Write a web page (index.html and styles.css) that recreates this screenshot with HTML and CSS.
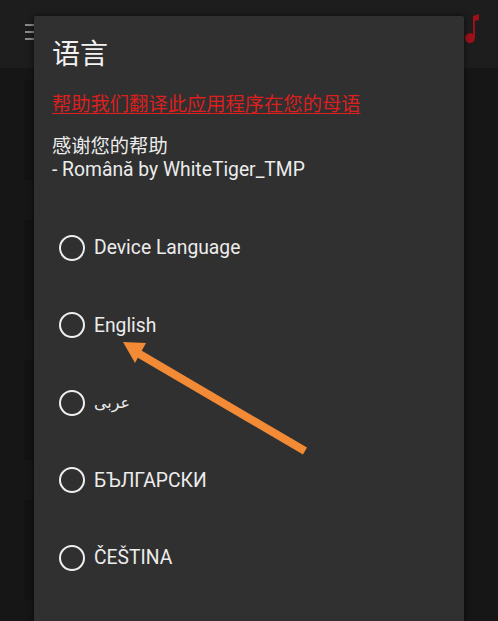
FILE: index.html
```html
<!DOCTYPE html>
<html>
<head>
<meta charset="utf-8">
<link rel="stylesheet" href="styles.css">
</head>
<body>
<div class="app">
  <header class="appbar">
    <div class="menu"><span></span><span></span><span></span></div>
    <div class="spacer"></div>
    <svg class="note" width="16" height="32" viewBox="0 0 16 32"><path d="M9 2 L15 0 L15 6 L11 7 L11 24 A5 5 0 1 1 9 20 Z" fill="#a8101a"/></svg>
  </header>
  <div class="content">
    <div class="ghost"></div>
    <div class="ghost"></div>
    <div class="ghost"></div>
    <div class="ghost"></div>
  </div>
</div>

<div class="dialog">
  <h1 class="title">语言</h1>
  <a class="link" href="#">帮助我们翻译此应用程序在您的母语</a>
  <p class="thanks">感谢您的帮助<br>- Română by WhiteTiger_TMP</p>
  <ul class="options">
    <li class="option"><span class="radio"></span><span class="label">Device Language</span></li>
    <li class="option"><span class="radio"></span><span class="label">English</span></li>
    <li class="option"><span class="radio"></span><span class="label arabic">عربى</span></li>
    <li class="option"><span class="radio"></span><span class="label">БЪЛГАРСКИ</span></li>
    <li class="option"><span class="radio"></span><span class="label">ČEŠTINA</span></li>
    <li class="option"><span class="radio"></span><span class="label">DANSK</span></li>
  </ul>
</div>

<svg class="arrow" width="498" height="621" viewBox="0 0 498 621">
  <line x1="305" y1="451" x2="136" y2="352" stroke="#f28a36" stroke-width="8" stroke-linecap="butt"/>
  <polygon points="123,342 146,343 135,363" fill="#f28a36"/>
</svg>
</body>
</html>
```

FILE: styles.css
```css
html, body {
  margin: 0;
  padding: 0;
  width: 498px;
  height: 621px;
  overflow: hidden;
  background: #161616;
  font-family: Roboto, "Noto Sans CJK SC", sans-serif;
}

.app {
  width: 498px;
  height: 621px;
  display: flex;
  flex-direction: column;
}

.appbar {
  height: 68px;
  background: #1d1d1d;
  display: flex;
  align-items: flex-start;
  padding: 0 20px 0 25px;
  box-sizing: border-box;
}

.menu {
  margin-top: 24px;
  display: flex;
  flex-direction: column;
  gap: 5px;
}

.menu span {
  display: block;
  width: 12px;
  height: 2px;
  background: #8a8a8a;
}

.spacer { flex: 1; }

.note {
  margin-top: 14px;
  margin-right: -2px;
  opacity: 0.9;
}

.content {
  flex: 1;
  display: flex;
  flex-direction: column;
  gap: 40px;
  padding: 12px 0 0 24px;
}

.ghost {
  height: 100px;
  width: 12px;
  background: #131313;
}

.dialog {
  position: absolute;
  left: 34px;
  top: 16px;
  width: 430px;
  height: 640px;
  background: #303030;
  box-shadow: 0 0 6px rgba(0,0,0,0.6);
  border-radius: 2px;
  padding: 19px 18px 0 18px;
  box-sizing: border-box;
  color: #ececec;
}

.title {
  margin: 0;
  font-family: "Noto Sans CJK SC", sans-serif;
  font-weight: 400;
  font-size: 28px;
  line-height: 34px;
  color: #f2f2f2;
}

.link {
  display: block;
  margin-top: 22px;
  font-family: "Noto Sans CJK SC", sans-serif;
  font-size: 19.3px;
  line-height: 24px;
  color: #dc1f1f;
  text-decoration: underline;
  text-underline-offset: 2px;
}

.thanks {
  margin: 20px 0 0 0;
  font-size: 19.3px;
  line-height: 23px;
  color: #ececec;
}

.options {
  list-style: none;
  margin: 28px 0 0 0;
  padding: 0 0 0 7px;
}

.option {
  height: 77.5px;
  display: flex;
  align-items: center;
  gap: 9px;
}

.radio {
  width: 22px;
  height: 22px;
  border: 2.5px solid #f0f0f0;
  border-radius: 50%;
  flex: none;
}

.label {
  font-size: 19.3px;
  color: #ececec;
}

.arabic {
  font-family: "DejaVu Sans", sans-serif;
  font-size: 16px;
}

.arrow {
  position: absolute;
  left: 0;
  top: 0;
  pointer-events: none;
}
```
